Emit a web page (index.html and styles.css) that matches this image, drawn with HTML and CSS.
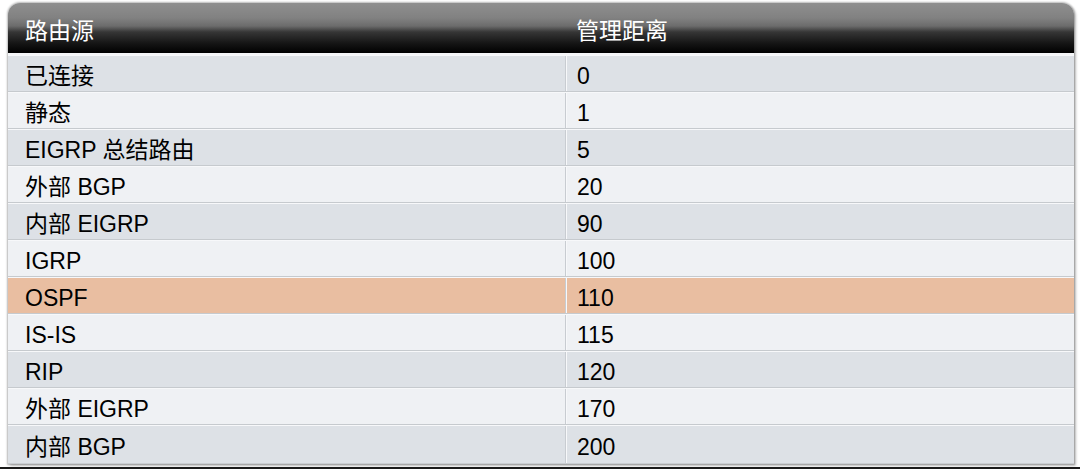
FILE: index.html
```html
<!DOCTYPE html>
<html lang="zh-CN">
<head>
<meta charset="utf-8">
<link rel="stylesheet" href="styles.css">
</head>
<body>
<div class="page">
  <div class="table">
    <div class="head">
      <div class="cell c1">路由源</div>
      <div class="cell c2">管理距离</div>
    </div>
    <div class="row dark"><div class="cell c1">已连接</div><div class="cell c2">0</div></div>
    <div class="row light"><div class="cell c1">静态</div><div class="cell c2">1</div></div>
    <div class="row dark"><div class="cell c1">EIGRP 总结路由</div><div class="cell c2">5</div></div>
    <div class="row light"><div class="cell c1">外部 BGP</div><div class="cell c2">20</div></div>
    <div class="row dark"><div class="cell c1">内部 EIGRP</div><div class="cell c2">90</div></div>
    <div class="row light"><div class="cell c1">IGRP</div><div class="cell c2">100</div></div>
    <div class="row hi"><div class="cell c1">OSPF</div><div class="cell c2">110</div></div>
    <div class="row light"><div class="cell c1">IS-IS</div><div class="cell c2">115</div></div>
    <div class="row dark"><div class="cell c1">RIP</div><div class="cell c2">120</div></div>
    <div class="row light"><div class="cell c1">外部 EIGRP</div><div class="cell c2">170</div></div>
    <div class="row dark last"><div class="cell c1">内部 BGP</div><div class="cell c2">200</div></div>
  </div>
  <div class="edge"></div>
</div>
</body>
</html>
```

FILE: styles.css
```css
html, body {
  margin: 0;
  padding: 0;
  background: #ffffff;
}

body {
  width: 1080px;
  height: 472px;
  overflow: hidden;
  font-family: "Liberation Sans", Arial, "Noto Sans CJK SC", sans-serif;
  font-size: 23px;
  line-height: 26px;
  color: #000;
}

.page {
  display: flex;
  flex-direction: column;
  padding: 3px 6px 0 8px;
  height: 469px;
  box-sizing: border-box;
}

.table {
  width: 1066px;
  display: flex;
  flex-direction: column;
  border-radius: 12px 12px 0 0;
  box-shadow: 0 0 2px 1px rgba(0,0,0,0.28), 2px 2px 3px rgba(0,0,0,0.2);
  background: #e3e6ea;
}

.head {
  display: flex;
  height: 50px;
  border-radius: 12px 12px 0 0;
  background: linear-gradient(to bottom, #8f8f8f 0%, #818181 30%, #6c6c6c 46%, #363636 58%, #161616 80%, #000 100%);
  color: #fff;
  border-bottom: 2px solid #f4f5f7;
}

.head .cell {
  padding-top: 6px;
}

.row {
  display: flex;
  height: 37px;
  box-sizing: border-box;
  border-top: 1px solid #f7f8fa;
  border-bottom: 1px solid #c6cace;
}

.row .cell {
  padding-top: 5px;
}

.row.last {
  height: 39px;
  border-bottom: 1px solid #c9cdd1;
}

.dark { background: #dde1e6; }
.light { background: #eff1f4; }
.hi { background: #e9bea1; }

.cell {
  display: flex;
  align-items: center;
  box-sizing: border-box;
  padding-left: 17px;
  white-space: nowrap;
}

.c1 {
  width: 557px;
}

.c2 {
  flex: 1;
  padding-left: 11px;
}

.row .c2 {
  border-left: 1px solid #c8ccd1;
  box-shadow: inset 1px 0 0 #f7f8fa;
}

.edge {
  margin: auto -6px 0 -8px;
  height: 2px;
  background: #1a1a1a;
}
```
